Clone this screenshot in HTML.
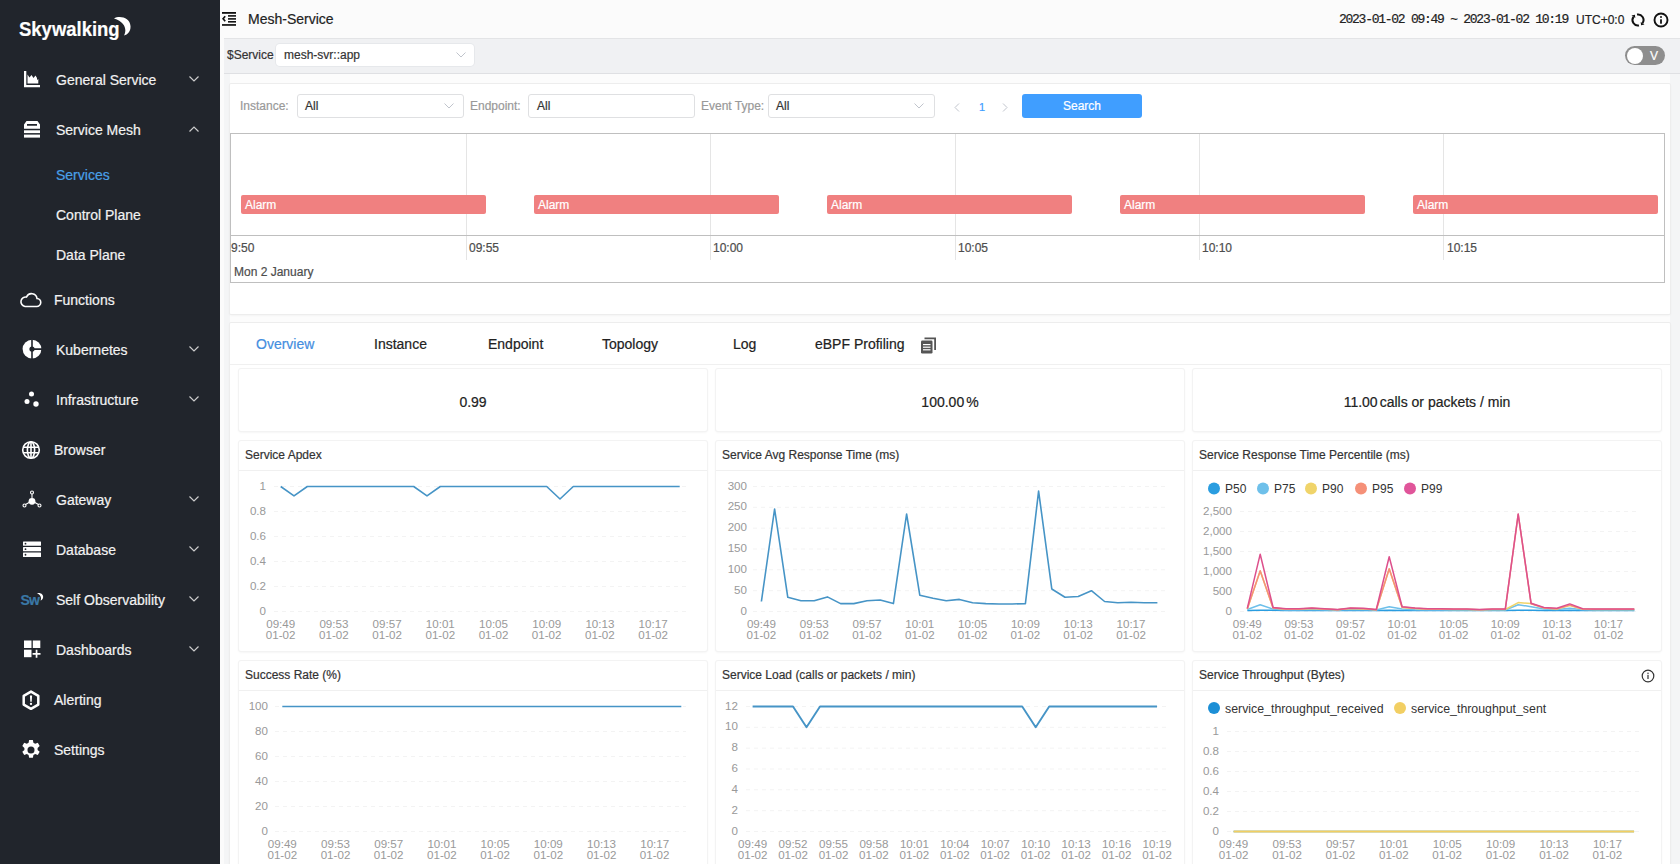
<!DOCTYPE html>
<html><head><meta charset="utf-8">
<style>
*{box-sizing:border-box;margin:0;padding:0}
html,body{width:1680px;height:864px;overflow:hidden;-webkit-text-stroke:0.2px currentColor;font-family:"Liberation Sans",sans-serif;background:#f4f5f6;color:#333}
.a{position:absolute}
.t{position:absolute;white-space:nowrap;line-height:1}
#side{left:0;top:0;width:220px;height:864px;background:#21252c}
.mi{position:absolute;left:56px;font-size:14px;color:#f2f2f2;line-height:1;white-space:nowrap}
.ic{position:absolute;left:22px;width:20px;height:20px}
.chev{position:absolute;left:189px;width:10px;height:6px}
.chev path{stroke:#cccccc;stroke-width:1.2}
#hdr{left:220px;top:0;width:1460px;height:38px;background:#fbfbfb}
#fbar{left:224px;top:38px;width:1456px;height:36px;background:#f0f1f3;border-top:1px solid #e3e4e6;border-bottom:1px solid #dfe0e3}
.card{position:absolute;background:#fff;border-radius:1px;box-shadow:0 0 0 1px #ededed,0 1px 3px rgba(0,0,0,.07)}
.sel{position:absolute;background:#fff;border:1px solid #dfe0e2;border-radius:3px}
.lbl{font-size:12px;color:#999}
.gl{stroke:#f3f3f3;stroke-width:1;stroke-dasharray:4 4}
.yl{font-size:11.6px;fill:#999;text-anchor:end;dominant-baseline:middle}
.xl{font-size:11.6px;fill:#999;text-anchor:middle}
.ctitle{position:absolute;left:6px;top:8.3px;font-size:12px;color:#333;line-height:1;white-space:nowrap}
.chdr{position:absolute;left:0;top:0;right:0;height:30px;border-bottom:1px solid #f0f0f0}
.al{top:61.3px;width:245px;height:19.2px;background:#f08080;border-radius:2px;color:#fff;font-size:12px;line-height:20.5px;padding-left:4px;white-space:nowrap}
.tl{top:107.6px;font-size:12px;color:#4d4d4d}
</style></head><body>
<div id="side" class="a">
<div class="t" style="left:19px;top:18px;font-size:21px;font-weight:bold;color:#fff;transform:scaleX(0.88);transform-origin:0 0">Skywalking</div>
<svg class="a" style="left:112px;top:16px" width="20" height="22" viewBox="0 0 20 22"><path d="M2 2.5 C8 -1 18 2 18.5 10 C18.8 15 16 18.5 12 19.5 C15 14 13.5 6 2 2.5Z" fill="#fff"/></svg>
<!-- General Service -->
<svg class="ic" style="top:70px" viewBox="0 0 20 20"><path d="M2 1h2.3v14H18v2.2H2z" fill="#fff"/><path d="M5.5 13.5V4.5l2 3 2-2.5 2 3 2-2.5 1.5 2.5v2l1.3-1V13.5z" fill="#fff"/></svg>
<div class="mi" style="top:73px">General Service</div>
<svg class="chev" style="top:76px" viewBox="0 0 10 6"><path d="M0.5 0.5L5 5l4.5-4.5" fill="none" stroke="#bbb" stroke-width="1"/></svg>
<!-- Service Mesh -->
<svg class="ic" style="top:120px" viewBox="0 0 20 20"><path d="M4.5 1h11l2.5 3.5v4.3H2V4.5z M5 4v1.8h10V4z" fill="#fff" fill-rule="evenodd"/><rect x="2" y="10.3" width="16" height="2.8" fill="#fff"/><rect x="2" y="14.6" width="16" height="3" fill="#fff"/></svg>
<div class="mi" style="top:123px">Service Mesh</div>
<svg class="chev" style="top:126px" viewBox="0 0 10 6"><path d="M0.5 5.5L5 1l4.5 4.5" fill="none" stroke="#bbb" stroke-width="1"/></svg>
<div class="mi" style="top:168px;color:#4aa0e8">Services</div>
<div class="mi" style="top:208px">Control Plane</div>
<div class="mi" style="top:248px">Data Plane</div>
<!-- Functions -->
<svg class="ic" style="top:290px;left:19px;width:23px" viewBox="0 0 23 20"><path d="M6 16.5h11.5a4 4 0 0 0 .5-8 5.5 5.5 0 0 0-10.5-1.5A4.5 4.5 0 0 0 6 16.5z" fill="none" stroke="#fff" stroke-width="1.6"/></svg>
<div class="mi" style="top:293px;left:54px">Functions</div>
<!-- Kubernetes -->
<svg class="ic" style="top:339px" viewBox="0 0 20 20"><circle cx="10" cy="10.1" r="9.4" fill="#fff"/><path d="M10 0V20.5M10 10.1h10" stroke="#21252c" stroke-width="1.6"/><circle cx="10" cy="10.1" r="2.6" fill="#21252c"/></svg>
<div class="mi" style="top:343px">Kubernetes</div>
<svg class="chev" style="top:346px" viewBox="0 0 10 6"><path d="M0.5 0.5L5 5l4.5-4.5" fill="none" stroke="#bbb" stroke-width="1"/></svg>
<!-- Infrastructure -->
<svg class="ic" style="top:390px" viewBox="0 0 20 20"><circle cx="9.5" cy="4" r="2.5" fill="#fff"/><circle cx="5" cy="11.5" r="2.5" fill="#fff"/><circle cx="14" cy="14" r="2.7" fill="#fff"/></svg>
<div class="mi" style="top:393px">Infrastructure</div>
<svg class="chev" style="top:396px" viewBox="0 0 10 6"><path d="M0.5 0.5L5 5l4.5-4.5" fill="none" stroke="#bbb" stroke-width="1"/></svg>
<!-- Browser -->
<svg class="ic" style="top:440px;left:21px" viewBox="0 0 20 20"><g fill="none" stroke="#fff" stroke-width="1.6"><circle cx="10" cy="10" r="8.3"/><ellipse cx="10" cy="10" rx="3.6" ry="8.3"/><path d="M10 1.7v16.6M2.5 7.3h15M2.5 12.7h15"/></g></svg>
<div class="mi" style="top:443px;left:54px">Browser</div>
<!-- Gateway -->
<svg class="ic" style="top:490px" viewBox="0 0 20 20"><g fill="none" stroke="#fff" stroke-width="1.1"><circle cx="10" cy="2.5" r="1.5"/><path d="M10 4v4M8 12l-4.5 2.5M12 12l4.5 2.5"/><circle cx="2.5" cy="15.5" r="1.5"/><circle cx="17.5" cy="15.5" r="1.5"/></g><circle cx="10" cy="11.3" r="3.4" fill="#fff"/></svg>
<div class="mi" style="top:493px">Gateway</div>
<svg class="chev" style="top:496px" viewBox="0 0 10 6"><path d="M0.5 0.5L5 5l4.5-4.5" fill="none" stroke="#bbb" stroke-width="1"/></svg>
<!-- Database -->
<svg class="ic" style="top:540px" viewBox="0 0 20 20"><g fill="#fff"><rect x="1" y="1.5" width="18" height="4.3" rx=".5"/><rect x="1" y="7.1" width="18" height="4.2" rx=".5"/><rect x="1" y="12.6" width="18" height="4.3" rx=".5"/></g><g fill="#21252c"><circle cx="3.5" cy="3.65" r=".9"/><circle cx="3.5" cy="9.2" r=".9"/><circle cx="3.5" cy="14.75" r=".9"/></g></svg>
<div class="mi" style="top:543px">Database</div>
<svg class="chev" style="top:546px" viewBox="0 0 10 6"><path d="M0.5 0.5L5 5l4.5-4.5" fill="none" stroke="#bbb" stroke-width="1"/></svg>
<!-- Self Observability -->
<div class="t" style="left:20.5px;top:593px;font-size:14px;font-weight:bold;color:#3a78a6;letter-spacing:-0.8px">Sw</div>
<svg class="a" style="left:36px;top:592px" width="8" height="9" viewBox="0 0 8 9"><path d="M1 1.2C4.5 0 8 2.5 7 6C6.5 7.5 5.5 8.3 4.5 8.6C5.8 6.5 5 3 1 1.2z" fill="#fff"/></svg>
<div class="mi" style="top:593px">Self Observability</div>
<svg class="chev" style="top:596px" viewBox="0 0 10 6"><path d="M0.5 0.5L5 5l4.5-4.5" fill="none" stroke="#bbb" stroke-width="1"/></svg>
<!-- Dashboards -->
<svg class="ic" style="top:640px" viewBox="0 0 20 20"><g fill="#fff"><rect x="2" y="0.5" width="7.5" height="7.5"/><rect x="10.8" y="0.5" width="7.5" height="7.5"/><rect x="2" y="9.7" width="7.5" height="7.5"/><path d="M13.7 9.8h1.7v3.2h3.1v1.7h-3.1v3.1h-1.7v-3.1h-3.1v-1.7h3.1z"/></g></svg>
<div class="mi" style="top:643px">Dashboards</div>
<svg class="chev" style="top:646px" viewBox="0 0 10 6"><path d="M0.5 0.5L5 5l4.5-4.5" fill="none" stroke="#bbb" stroke-width="1"/></svg>
<!-- Alerting -->
<svg class="ic" style="top:690px;left:21px" viewBox="0 0 20 20"><path d="M10 1.6l7.3 4.2v8.8L10 18.8l-7.3-4.2V5.8z" fill="none" stroke="#fff" stroke-width="2.5" stroke-linejoin="round"/><path d="M8.9 5.6h2.2l-.4 6.1h-1.4z" fill="#fff"/><circle cx="10" cy="13.9" r="1.15" fill="#fff"/></svg>
<div class="mi" style="top:693px;left:54px">Alerting</div>
<!-- Settings -->
<svg class="ic" style="top:740.3px;left:21px" viewBox="0.9 0.9 18.2 18.2"><path d="M8.3 1h3.4l.5 2.5 1.6.9 2.4-.9 1.7 2.9-1.9 1.7v1.8l1.9 1.7-1.7 2.9-2.4-.9-1.6.9-.5 2.5H8.3l-.5-2.5-1.6-.9-2.4.9-1.7-2.9 1.9-1.7V8.1L2.1 6.4l1.7-2.9 2.4.9 1.6-.9z" fill="#fff"/><circle cx="10" cy="10" r="3.2" fill="#21252c"/></svg>
<div class="mi" style="top:743px;left:54px">Settings</div>
</div>

<div class="a" style="left:220px;top:0;width:4px;height:864px;background:#fbfbfb"></div>
<div id="hdr" class="a">
<svg class="a" style="left:2px;top:12px" width="15" height="15" viewBox="0 0 15 15"><g fill="#111"><rect x="0" y="0" width="14" height="1.8"/><rect x="6" y="3.1" width="8" height="1.6"/><rect x="6" y="6.1" width="8" height="1.6"/><rect x="6" y="9.0" width="8" height="1.6"/><rect x="0" y="12.1" width="14" height="1.7"/></g><path d="M3.2 4.2L1.1 6.7L3.2 9.2" fill="none" stroke="#111" stroke-width="1.7"/></svg>
<div class="t" style="left:28px;top:12px;font-size:14px;color:#222">Mesh-Service</div>
<div class="t" style="left:1119px;top:13px;font-size:13px;font-family:'Liberation Mono',monospace;color:#222;letter-spacing:-1.26px">2023-01-02 09:49 ~ 2023-01-02 10:19</div>
<div class="t" style="left:1356px;top:14px;font-size:12px;color:#222">UTC+0:0</div>
<svg class="a" style="left:1410px;top:13.4px" width="17" height="15" viewBox="0 0 17 15"><g fill="none" stroke="#111" stroke-width="2"><path d="M7.04 1.58A5.5 5.5 0 0 1 12.5 10.15"/><path d="M8.96 12.42A5.5 5.5 0 0 1 3.5 3.85"/></g><path d="M11.07 12.2L14.5 11.5L10.7 8.9z M4.94 1.8L1.5 2.5L5.3 5.1z" fill="#111"/></svg>
<svg class="a" style="left:1433px;top:12.4px" width="17" height="17" viewBox="0 0 17 17"><circle cx="8" cy="8" r="6.5" fill="none" stroke="#111" stroke-width="1.9"/><rect x="7.1" y="7.3" width="1.8" height="4.4" fill="#111"/><circle cx="8" cy="4.9" r="1" fill="#111"/></svg>
</div>
<div id="fbar" class="a">
<div class="t" style="left:3px;top:10px;font-size:12px;color:#333">$Service</div>
<div class="a" style="left:52px;top:5px;width:198px;height:22px;background:#fff;border-radius:4px;box-shadow:0 0 0 1px #e6e8eb"></div>
<div class="t" style="left:60px;top:10px;font-size:12px;color:#333">mesh-svr::app</div>
<svg class="a" style="left:232px;top:13px" width="10" height="6" viewBox="0 0 10 6"><path d="M0.5 0.5L5 5l4.5-4.5" fill="none" stroke="#c0c4cc" stroke-width="1"/></svg>
<div class="a" style="left:1401px;top:7px;width:40px;height:19px;border-radius:10px;background:#8e8e8e"></div>
<div class="a" style="left:1403px;top:8.5px;width:16px;height:16px;border-radius:8px;background:#fff"></div>
<div class="t" style="left:1426px;top:10.5px;font-size:12px;color:#fff">V</div>
</div>
<div class="a" style="left:230px;top:74px;width:1440px;height:790px;background:#fcfcfc"></div>
<!-- events card -->
<div class="card" style="left:230px;top:84px;width:1440px;height:230px">
<div class="t lbl" style="left:10px;top:16px">Instance:</div>
<div class="sel" style="left:67px;top:10px;width:167px;height:24px"></div>
<div class="t" style="left:75px;top:16px;font-size:12px;color:#333">All</div>
<svg class="a" style="left:214px;top:19px" width="10" height="6" viewBox="0 0 10 6"><path d="M0.5 0.5L5 5l4.5-4.5" fill="none" stroke="#c0c4cc" stroke-width="1"/></svg>
<div class="t lbl" style="left:240px;top:16px">Endpoint:</div>
<div class="sel" style="left:298px;top:10px;width:167px;height:24px"></div>
<div class="t" style="left:307px;top:16px;font-size:12px;color:#333">All</div>
<div class="t lbl" style="left:471px;top:16px">Event Type:</div>
<div class="sel" style="left:538px;top:10px;width:167px;height:24px"></div>
<div class="t" style="left:546px;top:16px;font-size:12px;color:#333">All</div>
<svg class="a" style="left:684px;top:19px" width="10" height="6" viewBox="0 0 10 6"><path d="M0.5 0.5L5 5l4.5-4.5" fill="none" stroke="#c0c4cc" stroke-width="1"/></svg>
<svg class="a" style="left:724px;top:19px" width="6" height="9" viewBox="0 0 6 9"><path d="M5 .5L1 4.5l4 4" fill="none" stroke="#c0c4cc" stroke-width="1"/></svg>
<div class="t" style="left:749px;top:18px;font-size:11px;color:#409eff">1</div>
<svg class="a" style="left:772px;top:19px" width="6" height="9" viewBox="0 0 6 9"><path d="M1 .5l4 4-4 4" fill="none" stroke="#c0c4cc" stroke-width="1"/></svg>
<div class="a" style="left:792px;top:10px;width:120px;height:24px;background:#409eff;border-radius:3px"></div>
<div class="t" style="left:833px;top:16px;font-size:12px;color:#fff">Search</div>
<!-- timeline -->
<div class="a" style="left:0;top:49px;width:1435px;height:150px;border:1px solid #bfbfbf;overflow:hidden">
<div class="a" style="left:235px;top:0;width:1px;height:126px;background:#e5e5e5"></div>
<div class="a" style="left:479px;top:0;width:1px;height:126px;background:#e5e5e5"></div>
<div class="a" style="left:724px;top:0;width:1px;height:126px;background:#e5e5e5"></div>
<div class="a" style="left:968px;top:0;width:1px;height:126px;background:#e5e5e5"></div>
<div class="a" style="left:1212px;top:0;width:1px;height:126px;background:#e5e5e5"></div>
<div class="a" style="left:0;top:101px;width:1435px;height:1px;background:#bfbfbf"></div>
<div class="a al" style="left:10px">Alarm</div>
<div class="a al" style="left:303px">Alarm</div>
<div class="a al" style="left:596px">Alarm</div>
<div class="a al" style="left:889px">Alarm</div>
<div class="a al" style="left:1182px">Alarm</div>
<div class="t tl" style="left:0px">9:50</div>
<div class="t tl" style="left:238px">09:55</div>
<div class="t tl" style="left:482px">10:00</div>
<div class="t tl" style="left:727px">10:05</div>
<div class="t tl" style="left:971px">10:10</div>
<div class="t tl" style="left:1216px">10:15</div>
<div class="t" style="left:3px;top:132px;font-size:12px;color:#4d4d4d">Mon 2 January</div>
</div>

</div>

<div class="card" style="left:230px;top:323px;width:1440px;height:560px">
<div class="a" style="left:0;top:41px;width:1440px;height:1px;background:#f0f0f0"></div>
<div class="t" style="left:26px;top:14px;font-size:14px;color:#448ee0">Overview</div>
<div class="t" style="left:144px;top:14px;font-size:14px;color:#222">Instance</div>
<div class="t" style="left:258px;top:14px;font-size:14px;color:#222">Endpoint</div>
<div class="t" style="left:372px;top:14px;font-size:14px;color:#222">Topology</div>
<div class="t" style="left:503px;top:14px;font-size:14px;color:#222">Log</div>
<div class="t" style="left:585px;top:14px;font-size:14px;color:#222">eBPF Profiling</div>
<svg class="a" style="left:690px;top:14px" width="17" height="17" viewBox="0 0 17 17"><path d="M4.5 0.5h11.5v12.5h-1.8V2.3H4.5z" fill="#555"/><rect x="1" y="3.5" width="11.5" height="13" rx="1.2" fill="#555"/><g fill="#fff"><rect x="3" y="7" width="7.5" height="1.2"/><rect x="3" y="9.6" width="7.5" height="1.2"/><rect x="3" y="12.2" width="7.5" height="1.2"/></g></svg>
</div>
<div class="card" style="left:239px;top:369px;width:468px;height:62px;border-radius:2px;box-shadow:0 0 0 1px #f3f3f3,0 1px 3px rgba(0,0,0,.08)"><div class="t" style="left:0;width:468px;text-align:center;top:26px;font-size:14px;color:#222">0.99</div></div>
<div class="card" style="left:716px;top:369px;width:468px;height:62px;border-radius:2px;box-shadow:0 0 0 1px #f3f3f3,0 1px 3px rgba(0,0,0,.08)"><div class="t" style="left:0;width:468px;text-align:center;top:26px;font-size:14px;color:#222">100.00<span style="margin-left:2px">%</span></div></div>
<div class="card" style="left:1193px;top:369px;width:468px;height:62px;border-radius:2px;box-shadow:0 0 0 1px #f3f3f3,0 1px 3px rgba(0,0,0,.08)"><div class="t" style="left:0;width:468px;text-align:center;top:26px;font-size:14px;color:#222">11.00<span style="margin-left:2px">calls or packets / min</span></div></div>
<div class="card" style="left:239px;top:441px;width:468px;height:210px;border-radius:2px;box-shadow:0 0 0 1px #f3f3f3,0 1px 3px rgba(0,0,0,.08)">
<div class="chdr"></div><div class="ctitle">Service Apdex</div>
</div>
<svg class="a" style="left:239px;top:472px" width="468" height="179" viewBox="239 472 468 179">
<line class="gl" x1="274" y1="486.5" x2="686" y2="486.5"/>
<text class="yl" x="266" y="486.5">1</text>
<line class="gl" x1="274" y1="511.5" x2="686" y2="511.5"/>
<text class="yl" x="266" y="511.5">0.8</text>
<line class="gl" x1="274" y1="536.5" x2="686" y2="536.5"/>
<text class="yl" x="266" y="536.5">0.6</text>
<line class="gl" x1="274" y1="561.5" x2="686" y2="561.5"/>
<text class="yl" x="266" y="561.5">0.4</text>
<line class="gl" x1="274" y1="586.5" x2="686" y2="586.5"/>
<text class="yl" x="266" y="586.5">0.2</text>
<line class="gl" x1="274" y1="611.5" x2="686" y2="611.5"/>
<text class="yl" x="266" y="611.5">0</text>
<text class="xl" x="280.7" y="628">09:49</text><text class="xl" x="280.7" y="639">01-02</text>
<text class="xl" x="333.9" y="628">09:53</text><text class="xl" x="333.9" y="639">01-02</text>
<text class="xl" x="387.1" y="628">09:57</text><text class="xl" x="387.1" y="639">01-02</text>
<text class="xl" x="440.3" y="628">10:01</text><text class="xl" x="440.3" y="639">01-02</text>
<text class="xl" x="493.5" y="628">10:05</text><text class="xl" x="493.5" y="639">01-02</text>
<text class="xl" x="546.7" y="628">10:09</text><text class="xl" x="546.7" y="639">01-02</text>
<text class="xl" x="599.9" y="628">10:13</text><text class="xl" x="599.9" y="639">01-02</text>
<text class="xl" x="653.1" y="628">10:17</text><text class="xl" x="653.1" y="639">01-02</text>
<polyline points="280.7,486.5 294.0,495.9 307.3,486.5 320.6,486.5 333.9,486.5 347.2,486.5 360.5,486.5 373.8,486.5 387.1,486.5 400.4,486.5 413.7,486.5 427.0,495.9 440.3,486.5 453.6,486.5 466.9,486.5 480.2,486.5 493.5,486.5 506.8,486.5 520.1,486.5 533.4,486.5 546.7,486.5 560.0,499.0 573.3,486.5 586.6,486.5 599.9,486.5 613.2,486.5 626.5,486.5 639.8,486.5 653.1,486.5 666.4,486.5 679.7,486.5" fill="none" stroke="#4694c6" stroke-width="1.6" stroke-linejoin="round"/>
</svg>
<div class="card" style="left:716px;top:441px;width:468px;height:210px;border-radius:2px;box-shadow:0 0 0 1px #f3f3f3,0 1px 3px rgba(0,0,0,.08)">
<div class="chdr"></div><div class="ctitle">Service Avg Response Time (ms)</div>
</div>
<svg class="a" style="left:716px;top:472px" width="468" height="179" viewBox="716 472 468 179">
<line class="gl" x1="753" y1="486.5" x2="1167" y2="486.5"/>
<text class="yl" x="747" y="486.5">300</text>
<line class="gl" x1="753" y1="507.3" x2="1167" y2="507.3"/>
<text class="yl" x="747" y="507.3">250</text>
<line class="gl" x1="753" y1="528.2" x2="1167" y2="528.2"/>
<text class="yl" x="747" y="528.2">200</text>
<line class="gl" x1="753" y1="549.0" x2="1167" y2="549.0"/>
<text class="yl" x="747" y="549.0">150</text>
<line class="gl" x1="753" y1="569.8" x2="1167" y2="569.8"/>
<text class="yl" x="747" y="569.8">100</text>
<line class="gl" x1="753" y1="590.7" x2="1167" y2="590.7"/>
<text class="yl" x="747" y="590.7">50</text>
<line class="gl" x1="753" y1="611.5" x2="1167" y2="611.5"/>
<text class="yl" x="747" y="611.5">0</text>
<text class="xl" x="761.4" y="628">09:49</text><text class="xl" x="761.4" y="639">01-02</text>
<text class="xl" x="814.2" y="628">09:53</text><text class="xl" x="814.2" y="639">01-02</text>
<text class="xl" x="867.0" y="628">09:57</text><text class="xl" x="867.0" y="639">01-02</text>
<text class="xl" x="919.8" y="628">10:01</text><text class="xl" x="919.8" y="639">01-02</text>
<text class="xl" x="972.6" y="628">10:05</text><text class="xl" x="972.6" y="639">01-02</text>
<text class="xl" x="1025.4" y="628">10:09</text><text class="xl" x="1025.4" y="639">01-02</text>
<text class="xl" x="1078.2" y="628">10:13</text><text class="xl" x="1078.2" y="639">01-02</text>
<text class="xl" x="1131.0" y="628">10:17</text><text class="xl" x="1131.0" y="639">01-02</text>
<polyline points="761.4,601.5 774.6,509.0 787.8,597.3 801.0,600.8 814.2,600.8 827.4,596.9 840.6,603.6 853.8,603.6 867.0,600.8 880.2,600.0 893.4,603.6 906.6,514.0 919.8,595.2 933.0,598.2 946.2,600.7 959.4,599.4 972.6,602.8 985.8,603.6 999.0,604.0 1012.2,604.0 1025.4,603.6 1038.6,491.1 1051.8,589.0 1065.0,597.3 1078.2,596.5 1091.4,590.7 1104.6,601.5 1117.8,602.8 1131.0,602.3 1144.2,602.8 1157.4,602.8" fill="none" stroke="#4694c6" stroke-width="1.6" stroke-linejoin="round"/>
</svg>
<div class="card" style="left:1193px;top:441px;width:468px;height:210px;border-radius:2px;box-shadow:0 0 0 1px #f3f3f3,0 1px 3px rgba(0,0,0,.08)">
<div class="chdr"></div><div class="ctitle">Service Response Time Percentile (ms)</div>
</div>
<svg class="a" style="left:1193px;top:472px" width="468" height="179" viewBox="1193 472 468 179">
<line class="gl" x1="1240" y1="511.5" x2="1640" y2="511.5"/>
<text class="yl" x="1232" y="511.5">2,500</text>
<line class="gl" x1="1240" y1="531.5" x2="1640" y2="531.5"/>
<text class="yl" x="1232" y="531.5">2,000</text>
<line class="gl" x1="1240" y1="551.5" x2="1640" y2="551.5"/>
<text class="yl" x="1232" y="551.5">1,500</text>
<line class="gl" x1="1240" y1="571.5" x2="1640" y2="571.5"/>
<text class="yl" x="1232" y="571.5">1,000</text>
<line class="gl" x1="1240" y1="591.5" x2="1640" y2="591.5"/>
<text class="yl" x="1232" y="591.5">500</text>
<line class="gl" x1="1240" y1="611.5" x2="1640" y2="611.5"/>
<text class="yl" x="1232" y="611.5">0</text>
<text class="xl" x="1247.3" y="628">09:49</text><text class="xl" x="1247.3" y="639">01-02</text>
<text class="xl" x="1298.9" y="628">09:53</text><text class="xl" x="1298.9" y="639">01-02</text>
<text class="xl" x="1350.5" y="628">09:57</text><text class="xl" x="1350.5" y="639">01-02</text>
<text class="xl" x="1402.1" y="628">10:01</text><text class="xl" x="1402.1" y="639">01-02</text>
<text class="xl" x="1453.7" y="628">10:05</text><text class="xl" x="1453.7" y="639">01-02</text>
<text class="xl" x="1505.3" y="628">10:09</text><text class="xl" x="1505.3" y="639">01-02</text>
<text class="xl" x="1556.9" y="628">10:13</text><text class="xl" x="1556.9" y="639">01-02</text>
<text class="xl" x="1608.5" y="628">10:17</text><text class="xl" x="1608.5" y="639">01-02</text>
<polyline points="1247.3,610.4 1260.2,610.3 1273.1,610.3 1286.0,610.5 1298.9,610.5 1311.8,610.4 1324.7,610.5 1337.6,610.6 1350.5,610.4 1363.4,610.5 1376.3,610.6 1389.2,610.3 1402.1,610.4 1415.0,610.5 1427.9,610.5 1440.8,610.5 1453.7,610.5 1466.6,610.5 1479.5,610.6 1492.4,610.5 1505.3,610.5 1518.2,610.3 1531.1,610.3 1544.0,610.4 1556.9,610.5 1569.8,610.3 1582.7,610.5 1595.6,610.5 1608.5,610.5 1621.4,610.5 1634.3,610.5" fill="none" stroke="#2a9de0" stroke-width="1.5" stroke-linejoin="round"/>
<polyline points="1247.3,609.5 1260.2,604.8 1273.1,609.1 1286.0,609.9 1298.9,609.9 1311.8,609.5 1324.7,609.9 1337.6,610.1 1350.5,609.5 1363.4,609.7 1376.3,610.1 1389.2,606.8 1402.1,609.1 1415.0,609.7 1427.9,609.9 1440.8,609.9 1453.7,610.0 1466.6,610.0 1479.5,610.1 1492.4,610.0 1505.3,610.0 1518.2,604.7 1531.1,606.7 1544.0,609.1 1556.9,609.5 1569.8,608.3 1582.7,609.7 1595.6,609.9 1608.5,609.9 1621.4,609.9 1634.3,609.9" fill="none" stroke="#6ec0ea" stroke-width="1.5" stroke-linejoin="round"/>
<polyline points="1247.3,608.9 1260.2,571.1 1273.1,608.1 1286.0,609.3 1298.9,609.3 1311.8,608.5 1324.7,609.3 1337.6,609.8 1350.5,608.5 1363.4,608.9 1376.3,609.8 1389.2,569.1 1402.1,607.5 1415.0,608.5 1427.9,609.3 1440.8,609.3 1453.7,609.5 1466.6,609.5 1479.5,609.8 1492.4,609.5 1505.3,609.5 1518.2,602.6 1531.1,603.5 1544.0,608.1 1556.9,608.9 1569.8,605.5 1582.7,609.3 1595.6,609.5 1608.5,609.5 1621.4,609.5 1634.3,609.5" fill="none" stroke="#f0d46a" stroke-width="1.5" stroke-linejoin="round"/>
<polyline points="1247.3,608.7 1260.2,570.8 1273.1,607.9 1286.0,609.1 1298.9,609.1 1311.8,608.3 1324.7,609.1 1337.6,609.7 1350.5,608.3 1363.4,608.7 1376.3,609.7 1389.2,568.8 1402.1,607.1 1415.0,608.3 1427.9,609.1 1440.8,609.1 1453.7,609.3 1466.6,609.3 1479.5,609.7 1492.4,609.3 1505.3,609.3 1518.2,514.3 1531.1,603.9 1544.0,607.9 1556.9,608.7 1569.8,605.1 1582.7,609.1 1595.6,609.3 1608.5,609.3 1621.4,609.3 1634.3,609.3" fill="none" stroke="#f59078" stroke-width="1.5" stroke-linejoin="round"/>
<polyline points="1247.3,608.3 1260.2,554.2 1273.1,607.5 1286.0,608.7 1298.9,608.7 1311.8,607.9 1324.7,608.7 1337.6,609.5 1350.5,607.9 1363.4,608.3 1376.3,609.5 1389.2,556.8 1402.1,606.7 1415.0,607.9 1427.9,608.7 1440.8,608.7 1453.7,609.1 1466.6,609.1 1479.5,609.5 1492.4,609.1 1505.3,609.1 1518.2,514.0 1531.1,603.3 1544.0,607.5 1556.9,608.3 1569.8,603.9 1582.7,608.7 1595.6,609.1 1608.5,609.1 1621.4,609.1 1634.3,609.1" fill="none" stroke="#dd508c" stroke-width="1.5" stroke-linejoin="round"/>
<circle cx="1214" cy="488.5" r="6" fill="#2a9de0"/><text x="1225" y="492.8" style="font-size:12px;fill:#333">P50</text>
<circle cx="1263" cy="488.5" r="6" fill="#6ec0ea"/><text x="1274" y="492.8" style="font-size:12px;fill:#333">P75</text>
<circle cx="1311" cy="488.5" r="6" fill="#f0d46a"/><text x="1322" y="492.8" style="font-size:12px;fill:#333">P90</text>
<circle cx="1361" cy="488.5" r="6" fill="#f59078"/><text x="1372" y="492.8" style="font-size:12px;fill:#333">P95</text>
<circle cx="1410" cy="488.5" r="6" fill="#e0559a"/><text x="1421" y="492.8" style="font-size:12px;fill:#333">P99</text>
</svg>
<div class="card" style="left:239px;top:661px;width:468px;height:220px;border-radius:2px;box-shadow:0 0 0 1px #f3f3f3,0 1px 3px rgba(0,0,0,.08)">
<div class="chdr"></div><div class="ctitle">Success Rate (%)</div>
</div>
<svg class="a" style="left:239px;top:692px" width="468" height="189" viewBox="239 692 468 189">
<line class="gl" x1="275" y1="706.5" x2="686" y2="706.5"/>
<text class="yl" x="268" y="706.5">100</text>
<line class="gl" x1="275" y1="731.5" x2="686" y2="731.5"/>
<text class="yl" x="268" y="731.5">80</text>
<line class="gl" x1="275" y1="756.5" x2="686" y2="756.5"/>
<text class="yl" x="268" y="756.5">60</text>
<line class="gl" x1="275" y1="781.5" x2="686" y2="781.5"/>
<text class="yl" x="268" y="781.5">40</text>
<line class="gl" x1="275" y1="806.5" x2="686" y2="806.5"/>
<text class="yl" x="268" y="806.5">20</text>
<line class="gl" x1="275" y1="831.5" x2="686" y2="831.5"/>
<text class="yl" x="268" y="831.5">0</text>
<text class="xl" x="282.3" y="848">09:49</text><text class="xl" x="282.3" y="859">01-02</text>
<text class="xl" x="335.5" y="848">09:53</text><text class="xl" x="335.5" y="859">01-02</text>
<text class="xl" x="388.7" y="848">09:57</text><text class="xl" x="388.7" y="859">01-02</text>
<text class="xl" x="441.9" y="848">10:01</text><text class="xl" x="441.9" y="859">01-02</text>
<text class="xl" x="495.1" y="848">10:05</text><text class="xl" x="495.1" y="859">01-02</text>
<text class="xl" x="548.3" y="848">10:09</text><text class="xl" x="548.3" y="859">01-02</text>
<text class="xl" x="601.5" y="848">10:13</text><text class="xl" x="601.5" y="859">01-02</text>
<text class="xl" x="654.7" y="848">10:17</text><text class="xl" x="654.7" y="859">01-02</text>
<polyline points="282.3,706.5 295.6,706.5 308.9,706.5 322.2,706.5 335.5,706.5 348.8,706.5 362.1,706.5 375.4,706.5 388.7,706.5 402.0,706.5 415.3,706.5 428.6,706.5 441.9,706.5 455.2,706.5 468.5,706.5 481.8,706.5 495.1,706.5 508.4,706.5 521.7,706.5 535.0,706.5 548.3,706.5 561.6,706.5 574.9,706.5 588.2,706.5 601.5,706.5 614.8,706.5 628.1,706.5 641.4,706.5 654.7,706.5 668.0,706.5 681.3,706.5" fill="none" stroke="#4694c6" stroke-width="1.6" stroke-linejoin="round"/>
</svg>
<div class="card" style="left:716px;top:661px;width:468px;height:220px;border-radius:2px;box-shadow:0 0 0 1px #f3f3f3,0 1px 3px rgba(0,0,0,.08)">
<div class="chdr"></div><div class="ctitle">Service Load (calls or packets / min)</div>
</div>
<svg class="a" style="left:716px;top:692px" width="468" height="189" viewBox="716 692 468 189">
<line class="gl" x1="746" y1="706.5" x2="1167" y2="706.5"/>
<text class="yl" x="738" y="706.5">12</text>
<line class="gl" x1="746" y1="727.3" x2="1167" y2="727.3"/>
<text class="yl" x="738" y="727.3">10</text>
<line class="gl" x1="746" y1="748.2" x2="1167" y2="748.2"/>
<text class="yl" x="738" y="748.2">8</text>
<line class="gl" x1="746" y1="769.0" x2="1167" y2="769.0"/>
<text class="yl" x="738" y="769.0">6</text>
<line class="gl" x1="746" y1="789.8" x2="1167" y2="789.8"/>
<text class="yl" x="738" y="789.8">4</text>
<line class="gl" x1="746" y1="810.7" x2="1167" y2="810.7"/>
<text class="yl" x="738" y="810.7">2</text>
<line class="gl" x1="746" y1="831.5" x2="1167" y2="831.5"/>
<text class="yl" x="738" y="831.5">0</text>
<text class="xl" x="752.6" y="848">09:49</text><text class="xl" x="752.6" y="859">01-02</text>
<text class="xl" x="793.0" y="848">09:52</text><text class="xl" x="793.0" y="859">01-02</text>
<text class="xl" x="833.5" y="848">09:55</text><text class="xl" x="833.5" y="859">01-02</text>
<text class="xl" x="873.9" y="848">09:58</text><text class="xl" x="873.9" y="859">01-02</text>
<text class="xl" x="914.4" y="848">10:01</text><text class="xl" x="914.4" y="859">01-02</text>
<text class="xl" x="954.8" y="848">10:04</text><text class="xl" x="954.8" y="859">01-02</text>
<text class="xl" x="995.2" y="848">10:07</text><text class="xl" x="995.2" y="859">01-02</text>
<text class="xl" x="1035.7" y="848">10:10</text><text class="xl" x="1035.7" y="859">01-02</text>
<text class="xl" x="1076.1" y="848">10:13</text><text class="xl" x="1076.1" y="859">01-02</text>
<text class="xl" x="1116.6" y="848">10:16</text><text class="xl" x="1116.6" y="859">01-02</text>
<text class="xl" x="1157.0" y="848">10:19</text><text class="xl" x="1157.0" y="859">01-02</text>
<polyline points="752.6,706.5 766.1,706.5 779.6,706.5 793.0,706.5 806.5,727.3 820.0,706.5 833.5,706.5 847.0,706.5 860.4,706.5 873.9,706.5 887.4,706.5 900.9,706.5 914.4,706.5 927.8,706.5 941.3,706.5 954.8,706.5 968.3,706.5 981.8,706.5 995.2,706.5 1008.7,706.5 1022.2,706.5 1035.7,727.3 1049.2,706.5 1062.6,706.5 1076.1,706.5 1089.6,706.5 1103.1,706.5 1116.6,706.5 1130.0,706.5 1143.5,706.5 1157.0,706.5" fill="none" stroke="#4694c6" stroke-width="1.9" stroke-linejoin="round"/>
</svg>
<div class="card" style="left:1193px;top:661px;width:468px;height:220px;border-radius:2px;box-shadow:0 0 0 1px #f3f3f3,0 1px 3px rgba(0,0,0,.08)">
<div class="chdr"></div><div class="ctitle">Service Throughput (Bytes)</div>
<svg class="a" style="left:448px;top:8px" width="14" height="14" viewBox="0 0 14 14"><circle cx="7" cy="7" r="5.8" fill="none" stroke="#333" stroke-width="1.2"/><rect x="6.4" y="5.8" width="1.2" height="4.2" fill="#333"/><circle cx="7" cy="4.2" r=".75" fill="#333"/></svg>
</div>
<svg class="a" style="left:1193px;top:692px" width="468" height="189" viewBox="1193 692 468 189">
<line class="gl" x1="1227" y1="731.5" x2="1640" y2="731.5"/>
<text class="yl" x="1219" y="731.5">1</text>
<line class="gl" x1="1227" y1="751.5" x2="1640" y2="751.5"/>
<text class="yl" x="1219" y="751.5">0.8</text>
<line class="gl" x1="1227" y1="771.5" x2="1640" y2="771.5"/>
<text class="yl" x="1219" y="771.5">0.6</text>
<line class="gl" x1="1227" y1="791.5" x2="1640" y2="791.5"/>
<text class="yl" x="1219" y="791.5">0.4</text>
<line class="gl" x1="1227" y1="811.5" x2="1640" y2="811.5"/>
<text class="yl" x="1219" y="811.5">0.2</text>
<line class="gl" x1="1227" y1="831.5" x2="1640" y2="831.5"/>
<text class="yl" x="1219" y="831.5">0</text>
<text class="xl" x="1233.6" y="848">09:49</text><text class="xl" x="1233.6" y="859">01-02</text>
<text class="xl" x="1287.0" y="848">09:53</text><text class="xl" x="1287.0" y="859">01-02</text>
<text class="xl" x="1340.4" y="848">09:57</text><text class="xl" x="1340.4" y="859">01-02</text>
<text class="xl" x="1393.8" y="848">10:01</text><text class="xl" x="1393.8" y="859">01-02</text>
<text class="xl" x="1447.2" y="848">10:05</text><text class="xl" x="1447.2" y="859">01-02</text>
<text class="xl" x="1500.6" y="848">10:09</text><text class="xl" x="1500.6" y="859">01-02</text>
<text class="xl" x="1554.0" y="848">10:13</text><text class="xl" x="1554.0" y="859">01-02</text>
<text class="xl" x="1607.4" y="848">10:17</text><text class="xl" x="1607.4" y="859">01-02</text>
<polyline points="1233.6,831.5 1246.9,831.5 1260.3,831.5 1273.6,831.5 1287.0,831.5 1300.3,831.5 1313.7,831.5 1327.0,831.5 1340.4,831.5 1353.8,831.5 1367.1,831.5 1380.4,831.5 1393.8,831.5 1407.1,831.5 1420.5,831.5 1433.8,831.5 1447.2,831.5 1460.5,831.5 1473.9,831.5 1487.2,831.5 1500.6,831.5 1513.9,831.5 1527.3,831.5 1540.6,831.5 1554.0,831.5 1567.3,831.5 1580.7,831.5 1594.0,831.5 1607.4,831.5 1620.8,831.5 1634.1,831.5" fill="none" stroke="#1c8fd6" stroke-width="1.5" stroke-linejoin="round"/>
<polyline points="1233.6,831.5 1246.9,831.5 1260.3,831.5 1273.6,831.5 1287.0,831.5 1300.3,831.5 1313.7,831.5 1327.0,831.5 1340.4,831.5 1353.8,831.5 1367.1,831.5 1380.4,831.5 1393.8,831.5 1407.1,831.5 1420.5,831.5 1433.8,831.5 1447.2,831.5 1460.5,831.5 1473.9,831.5 1487.2,831.5 1500.6,831.5 1513.9,831.5 1527.3,831.5 1540.6,831.5 1554.0,831.5 1567.3,831.5 1580.7,831.5 1594.0,831.5 1607.4,831.5 1620.8,831.5 1634.1,831.5" fill="none" stroke="#f2cf63" stroke-width="1.8" stroke-linejoin="round"/>
<circle cx="1214" cy="708" r="6" fill="#1c8fd6"/><text x="1225" y="713.0999999999999" style="font-size:12.35px;fill:#333">service_throughput_received</text>
<circle cx="1400" cy="708" r="6" fill="#f2cf63"/><text x="1411" y="713.0999999999999" style="font-size:12.35px;fill:#333">service_throughput_sent</text>
</svg>
</body></html>
